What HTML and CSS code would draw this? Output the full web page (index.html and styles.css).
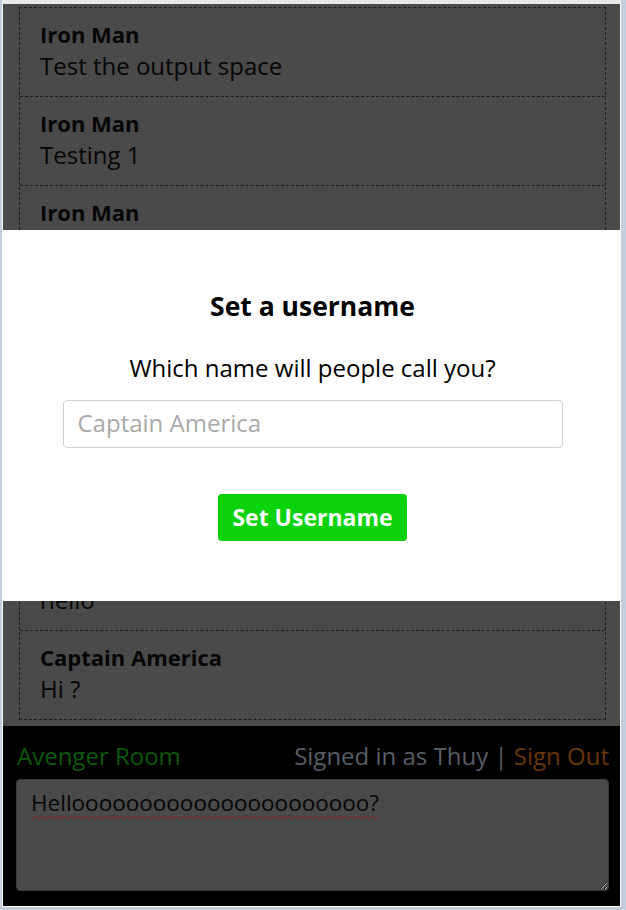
FILE: index.html
```html
<!DOCTYPE html>
<html lang="en">
<head>
<meta charset="utf-8">
<title>Avenger Room</title>
<link rel="stylesheet" href="styles.css">
</head>
<body>
<div class="window">
  <div class="app">
    <main class="messages">
      <ul class="message-list">
        <li class="message"><div class="author">Iron Man</div><div class="text">Test the output space</div></li>
        <li class="message"><div class="author">Iron Man</div><div class="text">Testing 1</div></li>
        <li class="message"><div class="author">Iron Man</div><div class="text">Testing 2</div></li>
        <li class="message"><div class="author">Captain America</div><div class="text">Hey Tony</div></li>
        <li class="message"><div class="author">Iron Man</div><div class="text">What's up?</div></li>
        <li class="message"><div class="author">Captain America</div><div class="text">Nothing much</div></li>
        <li class="message"><div class="author">Iron Man</div><div class="text">hello</div></li>
        <li class="message"><div class="author">Captain America</div><div class="text">Hi ?</div></li>
      </ul>
    </main>
    <footer class="composer">
      <div class="composer-bar">
        <span class="room-name">Avenger Room</span>
        <span class="session">Signed in as Thuy | <a class="sign-out" href="#">Sign Out</a></span>
      </div>
      <textarea class="composer-input" spellcheck="true">Helloooooooooooooooooooooo?</textarea>
    </footer>

    <div class="modal">
      <h2 class="modal-title">Set a username</h2>
      <p class="modal-question">Which name will people call you?</p>
      <input class="modal-input" type="text" placeholder="Captain America">
      <div class="modal-actions">
        <button class="modal-button" type="button">Set Username</button>
      </div>
    </div>
  </div>
</div>
</body>
</html>
```
FILE: styles.css
```css
html, body {
  margin: 0;
  padding: 0;
}

body {
  background: #c3cfdd;
  font-family: "Open Sans", "Noto Sans", sans-serif;
  color: #000;
}

.window {
  margin: 0 5px 3px 2px;
  border: 1px solid #fff;
  border-top: 4px solid #e8e8e8;
}

.app {
  position: relative;
  height: 902px;
  display: flex;
  flex-direction: column;
  overflow: hidden;
}

/* ---------- messages ---------- */
.messages {
  flex: 1;
  min-height: 0;
  overflow: hidden;
  background: #4a4a4a;
  padding: 3px 14px 0 16px;
}

.message-list {
  list-style: none;
  margin: 0;
  padding: 0;
  border: 1px dashed #1f1f1f;
}

.message {
  height: 89px;
  box-sizing: border-box;
  padding: 11px 20px 0 20px;
  border-bottom: 1px dashed #1f1f1f;
}

.message:last-child {
  height: 88px;
  border-bottom: none;
}

.author {
  font-weight: 700;
  font-size: 22px;
  line-height: 31px;
  white-space: nowrap;
  color: #050505;
}

.text {
  font-size: 24px;
  line-height: 31px;
  white-space: nowrap;
  color: #050505;
}

/* ---------- composer ---------- */
.composer {
  flex: 0 0 180px;
  box-sizing: border-box;
  background: #000;
  padding: 14px 11px 15px 13px;
  display: flex;
  flex-direction: column;
  gap: 8px;
}

.composer-bar {
  display: flex;
  justify-content: space-between;
  align-items: baseline;
  font-size: 24px;
  line-height: 31px;
  white-space: nowrap;
}

.room-name {
  color: #0a5a0a;
  padding-left: 1px;
}

.session {
  color: #585e66;
}

.sign-out {
  color: #683708;
  text-decoration: none;
}

.composer-input {
  flex: 1;
  display: block;
  width: 100%;
  box-sizing: border-box;
  margin: 0;
  background: #4a4a4a;
  border: 1px solid #3a3a3a;
  border-radius: 4px;
  padding: 7px 14px;
  font-family: "Open Sans", "Noto Sans", sans-serif;
  font-size: 22.5px;
  line-height: 31px;
  color: #050505;
  text-decoration: underline wavy #8a1a1a;
  text-decoration-thickness: 1px;
  text-underline-offset: 4px;
}

/* ---------- modal ---------- */
.modal {
  position: absolute;
  top: 226px;
  left: 0;
  right: 0;
  height: 371px;
  box-sizing: border-box;
  background: #fff;
  padding: 58px 0 0 2px;
  text-align: center;
}

.modal-title {
  margin: 0;
  font-size: 26.5px;
  font-weight: 700;
  line-height: 36px;
}

.modal-question {
  margin: 28px 0 0;
  font-size: 24px;
  line-height: 31px;
}

.modal-input {
  display: block;
  margin: 17px auto 0;
  width: 500px;
  height: 48px;
  box-sizing: border-box;
  border: 1px solid #cfcfcf;
  border-radius: 4px;
  padding: 0 14px 3px;
  font-family: "Open Sans", "Noto Sans", sans-serif;
  font-size: 24px;
  color: #333;
  outline: none;
}

.modal-input::placeholder {
  color: #a9a9a9;
}

.modal-actions {
  margin-top: 46px;
}

.modal-button {
  height: 47px;
  padding: 0 14px;
  border: none;
  border-radius: 4px;
  background: #0bd30b;
  color: #fff;
  font-family: "Open Sans", "Noto Sans", sans-serif;
  font-size: 23px;
  font-weight: 700;
  line-height: 31px;
  cursor: pointer;
}
```
